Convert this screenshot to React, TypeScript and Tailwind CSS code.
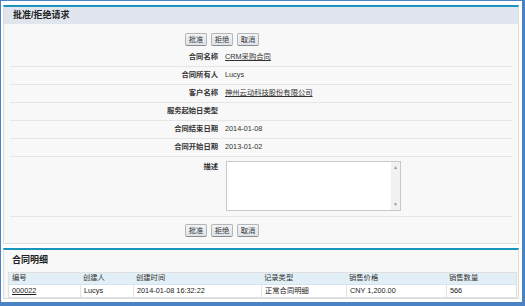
import React from "react";

const font = { fontFamily: '"Liberation Sans", "Noto Sans CJK SC", sans-serif' };

function Btn({ children }: { children: React.ReactNode }) {
  return (
    <div className="h-[13px] w-[22px] flex items-center justify-center border border-[#b5b5b5] border-b-[#8c8c8c] rounded-[2px] bg-gradient-to-b from-[#f2f4f7] to-[#dde3ea] text-[7.3px] leading-none text-[#333]">
      {children}
    </div>
  );
}

function Buttons() {
  return (
    <div className="flex gap-[4px] pl-[181px]">
      <Btn>批准</Btn>
      <Btn>拒绝</Btn>
      <Btn>取消</Btn>
    </div>
  );
}

function Row({ label, children }: { label: string; children?: React.ReactNode }) {
  return (
    <div className="flex h-[18px] items-center border-b border-[#e6e6e6] mx-[6px]">
      <div className="w-[214px] pr-[6px] text-right font-bold text-[7.3px] text-[#333] whitespace-nowrap">{label}</div>
      <div className="pl-[1px] text-[7.3px] text-[#333] whitespace-nowrap">{children}</div>
    </div>
  );
}

export default function App() {
  const cols = [
    { w: "w-[71px]", h: "编号" },
    { w: "w-[53px]", h: "创建人" },
    { w: "w-[128px]", h: "创建时间" },
    { w: "w-[85px]", h: "记录类型" },
    { w: "w-[100px]", h: "销售价格" },
    { w: "flex-1", h: "销售数量" },
  ];
  const data = ["000022", "Lucys", "2014-01-08 16:32:22", "正常合同明细", "CNY 1,200.00", "566"];
  return (
    <div style={font} className="w-[525px] h-[306px] bg-[#4a82c3] pt-[1px] pl-[1px] pr-[3px] pb-[4px]">
      <div className="w-full h-full bg-white pt-[4px] pl-[2px] pr-[2px] flex flex-col">
        {/* Panel 1 */}
        <div className="w-[516px] border-t-2 border-[#1a93bd] border-x border-b border-x-[#dcdcdc] border-b-[#dcdcdc] bg-[#f8f8f8] h-[239px] flex flex-col">
          <div className="h-[17px] bg-[#e1e6ee] flex items-center pl-[9px] text-[9px] font-bold text-[#222]">
            批准/拒绝请求
          </div>
          <div className="pt-[9px] h-[25px]">
            <Buttons />
          </div>
          <div className="flex flex-col">
            <Row label="合同名称"><span className="underline">CRM采购合同</span></Row>
            <Row label="合同所有人">Lucys</Row>
            <Row label="客户名称"><span className="underline">神州云动科技股份有限公司</span></Row>
            <Row label="服务起始日类型"></Row>
            <Row label="合同结束日期">2014-01-08</Row>
            <Row label="合同开始日期">2013-01-02</Row>
            <div className="flex h-[60px] border-b border-[#e6e6e6] mx-[6px]">
              <div className="w-[214px] pr-[6px] pt-[5px] text-right font-bold text-[7.3px] text-[#333]">描述</div>
              <div className="pt-[4px] pl-[2px]">
                <div className="w-[175px] h-[50px] border border-[#c8c8c8] bg-white flex justify-end">
                  <div className="w-[9px] h-full bg-[#f1f1f1] flex flex-col justify-between items-center py-[3px] text-[5px] text-[#999] leading-none">
                    <span>▲</span>
                    <span>▼</span>
                  </div>
                </div>
              </div>
            </div>
          </div>
          <div className="pt-[7px]">
            <Buttons />
          </div>
        </div>
        {/* Panel 2 */}
        <div className="mt-[4px] w-[516px] border-t-2 border-[#1a93bd] border-x border-b border-x-[#dcdcdc] border-b-[#dcdcdc] bg-[#f8f8f8] h-[51px] flex flex-col px-[4px]">
          <div className="h-[22px] flex items-center pl-[4px] text-[9px] font-bold text-[#222]">合同明细</div>
          <div className="flex flex-col w-[509px] border border-[#e0e0e0]">
            <div className="flex h-[12px] bg-[#e3eff6] border-b border-[#d5e3ec]">
              {cols.map((c, i) => (
                <div key={i} className={`${c.w} pl-[3px] flex items-center text-[7.3px] text-[#333]`}>{c.h}</div>
              ))}
            </div>
            <div className="flex h-[12px] bg-white">
              {cols.map((c, i) => (
                <div key={i} className={`${c.w} pl-[3px] flex items-center text-[7.3px] text-[#222] ${i > 0 ? "border-l border-[#e3e3e3]" : ""}`}>
                  {i === 0 ? <span className="underline">{data[i]}</span> : data[i]}
                </div>
              ))}
            </div>
          </div>
        </div>
      </div>
    </div>
  );
}
